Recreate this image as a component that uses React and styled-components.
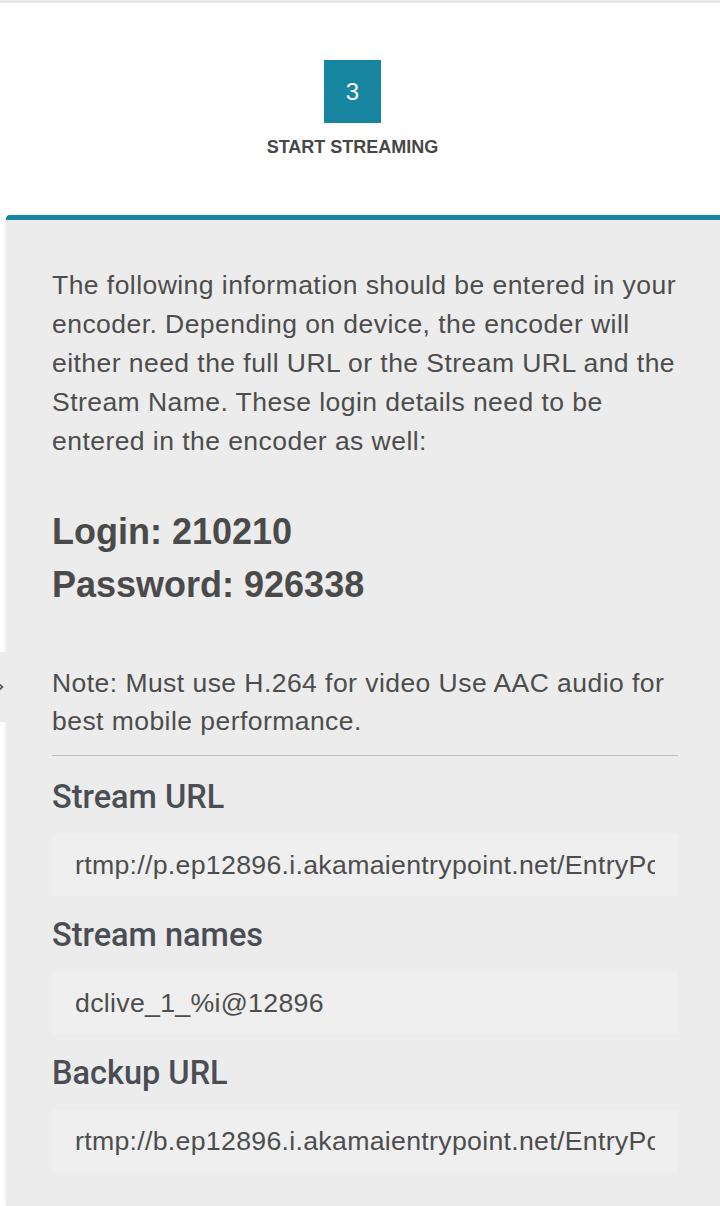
import React from "react";
import styled, { createGlobalStyle } from "styled-components";

const Global = createGlobalStyle`
  html, body { margin: 0; padding: 0; background: #ffffff; overflow: hidden; }
  body { font-family: "Liberation Sans", Arial, Helvetica, sans-serif; color: #4d4d4d; }
  * { box-sizing: border-box; }
`;

const Page = styled.div`
  position: relative;
  width: 720px;
  min-height: 1206px;
  border-top: 3px solid #e8e8e8;
  display: flex;
  flex-direction: column;
`;

const StepHeader = styled.header`
  display: flex;
  flex-direction: column;
  align-items: center;
  padding: 57px 15px 0 0;
  height: 212px;
`;

const StepNumber = styled.div`
  width: 57px;
  height: 63px;
  background: #1784a0;
  color: #ffffff;
  font-size: 24px;
  display: flex;
  align-items: center;
  justify-content: center;
`;

const StepLabel = styled.div`
  margin-top: 14px;
  font-size: 18px;
  font-weight: 700;
  text-transform: uppercase;
  color: #474747;
`;

const Panel = styled.section`
  flex: 1;
  margin-left: 6px;
  background: #ececec;
  border-top: 5px solid #1784a0;
  border-top-left-radius: 4px;
  box-shadow: -1px 0 3px rgba(0, 0, 0, 0.06);
  padding: 46px 42px 30px 46px;
`;

const Intro = styled.p`
  margin: 0;
  font-size: 26.5px;
  line-height: 39px;
  color: #4d4d4d;
  letter-spacing: 0.45px;
`;

const Credentials = styled.div`
  margin-top: 44px;
  font-size: 36px;
  font-weight: 700;
  line-height: 53px;
  color: #4a4a4a;
`;

const Note = styled.p`
  margin: 53px 0 0;
  font-size: 26.5px;
  line-height: 38px;
  color: #4d4d4d;
  letter-spacing: 0.45px;
`;

const Divider = styled.hr`
  margin: 15px 0 0;
  border: 0;
  border-top: 1px solid #bdbdbd;
`;

const FieldTitle = styled.label`
  display: block;
  margin: ${(p) => (p.$first ? "21px" : "19px")} 0 0;
  font-family: Roboto, "Liberation Sans", Arial, sans-serif;
  font-weight: 500;
  font-size: 32.5px;
  line-height: 40px;
  color: #4a4e54;
`;

const FieldValue = styled.input`
  display: block;
  width: 100%;
  margin-top: 17px;
  height: 62px;
  background: #efefef;
  border: 0;
  outline: none;
  padding: 0 23px;
  font-family: "Liberation Sans", Arial, Helvetica, sans-serif;
  font-size: 26.7px;
  letter-spacing: 0.3px;
  color: #4d4d4d;
`;

const SideTab = styled.div`
  position: absolute;
  left: 0;
  top: 649px;
  width: 7px;
  height: 70px;
  background: #ececec;
  display: flex;
  align-items: center;
  justify-content: flex-start;
`;

const fields = [
  { title: "Stream URL", value: "rtmp://p.ep12896.i.akamaientrypoint.net/EntryPoint" },
  { title: "Stream names", value: "dclive_1_%i@12896" },
  { title: "Backup URL", value: "rtmp://b.ep12896.i.akamaientrypoint.net/EntryPoint" },
];

export default function App() {
  return (
    <>
      <Global />
      <Page>
        <StepHeader>
          <StepNumber>3</StepNumber>
          <StepLabel>Start Streaming</StepLabel>
        </StepHeader>
        <Panel>
          <Intro>
            The following information should be entered in your encoder. Depending on device, the
            encoder will either need the full URL or the Stream URL and the Stream Name. These login
            details need to be entered in the encoder as well:
          </Intro>
          <Credentials>
            <div>Login: 210210</div>
            <div>Password: 926338</div>
          </Credentials>
          <Note>Note: Must use H.264 for video Use AAC audio for best mobile performance.</Note>
          <Divider />
          {fields.map((f, i) => (
            <React.Fragment key={f.title}>
              <FieldTitle $first={i === 0} htmlFor={`field-${i}`}>
                {f.title}
              </FieldTitle>
              <FieldValue id={`field-${i}`} readOnly value={f.value} />
            </React.Fragment>
          ))}
        </Panel>
        <SideTab>
          <svg width="4" height="10" viewBox="0 0 4 10">
            <path d="M-1 2 L2.5 5 L-1 8" fill="none" stroke="#555" strokeWidth="1.6" />
          </svg>
        </SideTab>
      </Page>
    </>
  );
}
